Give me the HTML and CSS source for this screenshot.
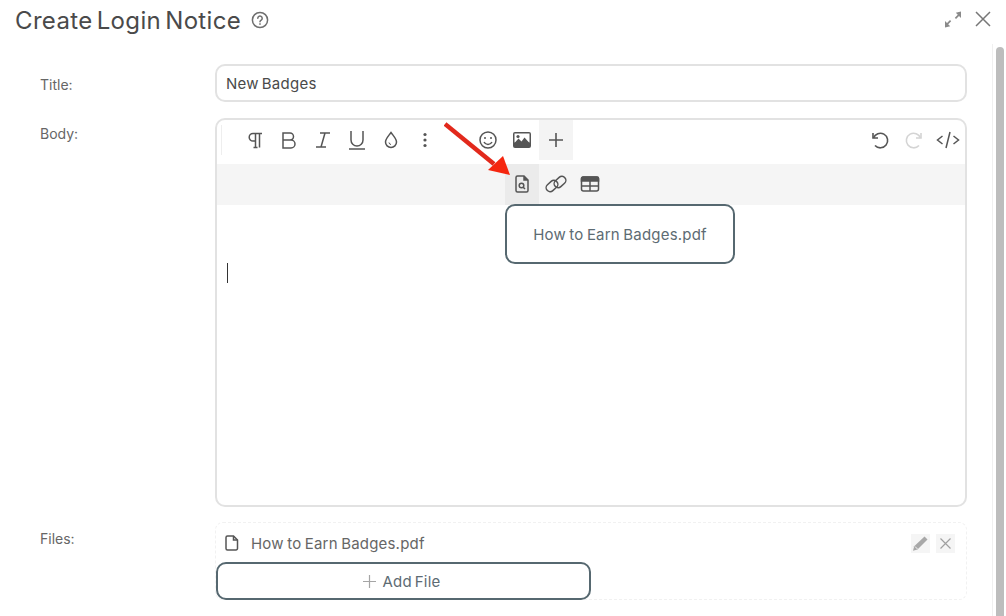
FILE: index.html
```html
<!DOCTYPE html>
<html lang="en">
<head>
    <meta charset="UTF-8">
    <title>Create Login Notice</title>
    <link rel="stylesheet" href="styles.css">
</head>
<body>
    <div class="dialog">
        <div class="dialog-header">
            <h1>Create Login Notice</h1>
            <svg class="help-icon" width="18" height="18" viewBox="0 0 18 18" fill="none" stroke="#6f6f6f" stroke-width="1.5">
                <circle cx="9" cy="9" r="7.6"/>
                <path d="M6.8 7.2a2.2 2.2 0 1 1 3.4 1.9c-.8.5-1.2.9-1.2 1.6" stroke-linecap="round"/>
                <circle cx="9" cy="13" r=".6" fill="#6f6f6f" stroke-width=".6"/>
            </svg>
            <div class="header-actions">
                <svg width="18" height="17" viewBox="0 0 18 17" fill="#8a8a8a">
                    <path d="M17 .5v6.500l-2-2-3 3-1.200-1.200 3-3-2-2z"/>
                    <path d="M1 16.500v-6.500l2 2 3-3 1.200 1.200-3 3 2 2z"/>
                </svg>
                <svg width="16" height="16" viewBox="0 0 16 16" fill="none" stroke="#777" stroke-width="1.5">
                    <path d="M1 1l14 14M15 1L1 15"/>
                </svg>
            </div>
        </div>

        <div class="dialog-body">
            <div class="form">
                <div class="form-row title-row">
                    <label>Title:</label>
                    <div class="text-input">New Badges</div>
                </div>

                <div class="form-row body-row">
                    <label>Body:</label>
                    <div class="editor">
                        <div class="toolbar">
                            <div class="tool-group">
                                <span class="tool-sep"></span>
                                <span class="tool"><svg width="20" height="20" viewBox="0 0 20 20" fill="none" stroke="#555" stroke-width="1.5"><path d="M17 3.500H8a3.800 3.800 0 0 0 0 7.600h2.500M10.500 3.500V17.500M14.500 3.500V17.500M8.500 17.500h4"/></svg></span>
                                <span class="tool"><svg width="20" height="20" viewBox="0 0 20 20" fill="none" stroke="#555" stroke-width="1.5"><path d="M4 3h7a3.500 3.500 0 0 1 0 7H4zM4 10h8a4 4 0 0 1 0 8H4z"/></svg></span>
                                <span class="tool"><svg width="20" height="20" viewBox="0 0 20 20" fill="none" stroke="#555" stroke-width="1.500"><path d="M7 3h10M3 17h10M12 3L8 17"/></svg></span>
                                <span class="tool"><svg width="20" height="20" viewBox="0 0 20 20" fill="none" stroke="#555" stroke-width="1.500"><path d="M4 1v9a6 6 0 0 0 12 0V1M2 19h16"/></svg></span>
                                <span class="tool"><svg width="20" height="20" viewBox="0 0 20 20" fill="none" stroke="#555" stroke-width="1.500"><path d="M10 2.500c3 4 5.500 6.500 5.500 9.500a5.500 5.500 0 0 1-11 0c0-3 2.500-5.500 5.500-9.500z"/><path d="M8 12.500a2.200 2.200 0 0 0 2 2" stroke-width="1"/></svg></span>
                                <span class="tool"><svg width="20" height="20" viewBox="0 0 20 20" fill="#555"><circle cx="10" cy="4.500" r="1.600"/><circle cx="10" cy="10" r="1.600"/><circle cx="10" cy="15.500" r="1.600"/></svg></span>
                                <span class="tool tool-emoji"><svg width="20" height="20" viewBox="0 0 20 20" fill="none" stroke="#555" stroke-width="1.500"><circle cx="10" cy="10" r="8"/><path d="M6 12a4.500 4.500 0 0 0 8 0"/><circle cx="7" cy="8" r="1" fill="#555" stroke="none"/><circle cx="13" cy="8" r="1" fill="#555" stroke="none"/></svg></span>
                                <span class="tool"><svg width="20" height="20" viewBox="0 0 20 20"><path d="M3 2h14a2 2 0 0 1 2 2v12a2 2 0 0 1-2 2H3a2 2 0 0 1-2-2V4a2 2 0 0 1 2-2z" fill="#555"/><rect x="2.500" y="3.500" width="15" height="9" fill="#fff"/><path d="M2.500 13l4-4.500 3 3 3-4 5 5.500v3h-15z" fill="#555"/><circle cx="6" cy="6.500" r="1.600" fill="#555"/></svg></span>
                                <span class="tool tool-on"><svg width="20" height="20" viewBox="0 0 20 20" fill="none" stroke="#555" stroke-width="1.600"><path d="M10 3v14M3 10h14"/></svg></span>
                            </div>
                            <div class="tool-group">
                                <span class="tool"><svg width="20" height="20" viewBox="0 0 20 20" fill="none" stroke="#555" stroke-width="1.600"><path d="M3 3v5h5"/><path d="M3.500 8A7.300 7.300 0 1 1 5 15.500"/></svg></span>
                                <span class="tool"><svg width="20" height="20" viewBox="0 0 20 20" fill="none" stroke="#d4d4d4" stroke-width="1.600"><path d="M17 3v5h-5"/><path d="M16.500 8A7.300 7.300 0 1 0 15 15.500"/></svg></span>
                                <span class="tool"><svg width="24" height="20" viewBox="0 0 24 20" fill="none" stroke="#555" stroke-width="1.500"><path d="M6.500 6L1.500 10l5 4M17.500 6l5 4-5 4M14 2l-4 16"/></svg></span>
                            </div>
                        </div>
                        <div class="toolbar-more">
                            <span class="tool tool-active"><svg width="20" height="20" viewBox="0 0 20 20" fill="none" stroke="#555" stroke-width="1.500"><path d="M5.500 2h6.500l4 4v10.500a1.500 1.500 0 0 1-1.500 1.500h-9a1.500 1.500 0 0 1-1.500-1.500v-13a1.500 1.500 0 0 1 1.500-1.500z"/><path d="M12 2v4h4" fill="#555"/><circle cx="9.500" cy="11.500" r="2.300"/><path d="M11.200 13.200l1.800 1.800"/></svg></span>
                            <span class="tool"><svg width="24" height="20" viewBox="0 0 24 20" fill="none" stroke="#555" stroke-width="1.500"><rect x="1.500" y="8" width="13" height="8" rx="4" transform="rotate(-42 8 12)"/><rect x="9.500" y="4" width="13" height="8" rx="4" transform="rotate(-42 16 8)"/></svg></span>
                            <span class="tool"><svg width="20" height="20" viewBox="0 0 20 20" fill="none" stroke="#555" stroke-width="1.500"><rect x="1.500" y="3" width="17" height="14" rx="2"/><path d="M1.500 4.500a1.500 1.500 0 0 1 1.500-1.500h14a1.500 1.500 0 0 1 1.500 1.500v2.500h-17z" fill="#555"/><path d="M1.500 12h17M10 7v10"/></svg></span>
                            <div class="file-menu">How to Earn Badges.pdf</div>
                        </div>
                        <div class="editor-area"><span class="caret"></span></div>
                    </div>
                </div>

                <div class="form-row files-row">
                    <label>Files:</label>
                    <div class="files-box">
                        <div class="file-item">
                            <svg width="14" height="16" viewBox="0 0 14 16" fill="none" stroke="#555" stroke-width="1.500"><path d="M2.500 1h6l4 4v8.500a1.500 1.500 0 0 1-1.500 1.500h-8.500a1.500 1.500 0 0 1-1.500-1.500v-11a1.500 1.500 0 0 1 1.500-1.500z"/><path d="M8.500 1v4h4"/></svg>
                            <span class="file-name">How to Earn Badges.pdf</span>
                            <span class="file-btn"><svg width="17" height="17" viewBox="0 0 17 17" fill="#a8a8a8"><path d="M12.500 1.500l3 3-10 10-4.500 1.200 1.200-4.500z"/><path d="M3 11.500l2.500 2.500" stroke="#f3f3f3" stroke-width="1"/></svg></span>
                            <span class="file-btn"><svg width="11" height="11" viewBox="0 0 11 11" fill="none" stroke="#a0a0a0" stroke-width="1.200"><path d="M.5.500l10 10M10.500.500l-10 10"/></svg></span>
                        </div>
                        <div class="add-file">
                            <svg width="13" height="13" viewBox="0 0 13 13" fill="none" stroke="#a5a5a5" stroke-width="1.200"><path d="M6.500 0v13M0 6.500h13"/></svg>
                            <span>Add File</span>
                        </div>
                    </div>
                </div>
            </div>
            <div class="scrollbar"><div class="scroll-thumb"></div></div>
        </div>
    </div>

    <svg class="arrow" width="80" height="70" viewBox="0 0 80 70">
        <path d="M1 2L50 42" stroke="#e2291c" stroke-width="4.500"/>
        <path d="M66 53L44 48L59 34z" fill="#f5260f"/>
    </svg>
</body>
</html>
```

FILE: styles.css
```css
* {
    box-sizing: border-box;
}
body {
    margin: 0;
    height: 616px;
    overflow: hidden;
    background: #fff;
    font-family: Inter, "Noto Sans", sans-serif;
    color: #555;
}
.dialog {
    display: flex;
    flex-direction: column;
    height: 616px;
}
.dialog-header {
    display: flex;
    align-items: center;
    height: 40px;
    padding: 0 15px;
    flex-shrink: 0;
}
.dialog-header h1 {
    margin: 0;
    font-size: 24px;
    font-weight: 400;
    letter-spacing: .35px;
    word-spacing: -3px;
    color: #4a4a4a;
}
.help-icon {
    margin-left: 10px;
}
.header-actions {
    display: flex;
    align-items: center;
    gap: 13px;
    margin-left: auto;
    margin-bottom: 2px;
}
.dialog-body {
    display: flex;
    flex: 1;
    min-height: 0;
}
.form {
    flex: 1;
    padding: 24px 0 0 40px;
}
.form-row {
    display: flex;
}
.form-row label {
    width: 175px;
    flex-shrink: 0;
    font-size: 14px;
    color: #666;
}
.title-row {
    height: 38px;
    align-items: center;
    margin-bottom: 16px;
}
.title-row label {
    margin-top: 2px;
}
.text-input {
    width: 752px;
    height: 38px;
    line-height: 36px;
    padding: 0 9px;
    border: 2px solid #e2e2e2;
    border-radius: 10px;
    font-size: 15px;
    letter-spacing: .25px;
    word-spacing: -1.5px;
    color: #4a4a4a;
}
.body-row {
    margin-bottom: 15px;
}
.body-row label {
    padding-top: 7px;
}
.editor {
    width: 752px;
    height: 389px;
    border: 2px solid #e2e2e2;
    border-radius: 10px;
    display: flex;
    flex-direction: column;
}
.toolbar {
    display: flex;
    justify-content: space-between;
    height: 44px;
    flex-shrink: 0;
}
.tool-group {
    display: flex;
    height: 40px;
}
.tool-sep {
    width: 1px;
    height: 30px;
    margin: 5px 16px 0 4px;
    background: #eeeeee;
}
.tool {
    display: flex;
    align-items: center;
    justify-content: center;
    width: 34px;
    height: 40px;
}
.tool-emoji {
    margin-left: 29px;
}
.tool-on {
    background: #f4f4f4;
}
.toolbar-more {
    position: relative;
    display: flex;
    height: 41px;
    padding-left: 288px;
    background: #f5f5f5;
    flex-shrink: 0;
}
.toolbar-more .tool {
    height: 41px;
    padding-bottom: 2px;
}
.tool-active {
    background: #ebebeb;
}
.file-menu {
    position: absolute;
    left: 288px;
    top: 40px;
    width: 230px;
    height: 60px;
    line-height: 57px;
    text-align: center;
    background: #fff;
    border: 2px solid #566870;
    border-radius: 10px;
    font-size: 15px;
    letter-spacing: .2px;
    word-spacing: -1px;
    color: #5d6b73;
    z-index: 2;
}
.editor-area {
    flex: 1;
    padding: 58px 0 0 10px;
}
.caret {
    display: block;
    width: 1px;
    height: 20px;
    background: #333;
}
.files-row label {
    padding-top: 8px;
}
.files-box {
    width: 752px;
    height: 78px;
    border: 1px dashed #f1f1f1;
    border-radius: 8px;
}
.file-item {
    display: flex;
    align-items: center;
    height: 39px;
    padding: 1px 11px 0 9px;
}
.file-name {
    flex: 1;
    margin-left: 12px;
    font-size: 15px;
    letter-spacing: .2px;
    word-spacing: -1px;
    color: #666;
}
.file-btn {
    display: flex;
    align-items: center;
    justify-content: center;
    width: 19px;
    height: 19px;
    margin-left: 6px;
    background: #f5f5f5;
}
.add-file {
    display: flex;
    align-items: center;
    justify-content: center;
    gap: 7px;
    width: 375px;
    height: 38px;
    padding-right: 4px;
    border: 2px solid #566870;
    border-radius: 10px;
    font-size: 15px;
    letter-spacing: .2px;
    word-spacing: -1.5px;
    color: #5d6b73;
}
.scrollbar {
    width: 14px;
    flex-shrink: 0;
    padding: 3px 2px 0 3px;
    margin-top: 4px;
    border-left: 1px solid #f0f0f0;
}
.scroll-thumb {
    width: 8px;
    height: 100%;
    background: #bdbdbd;
    border-radius: 4px 4px 0 0;
}
.arrow {
    position: absolute;
    left: 444px;
    top: 122px;
    z-index: 3;
}
```
